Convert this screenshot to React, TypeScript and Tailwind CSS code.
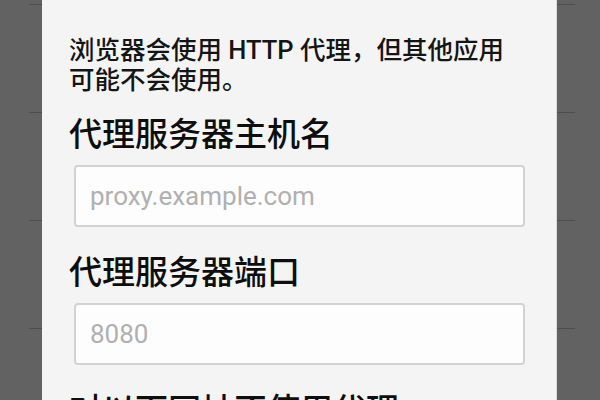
import React from "react";

const cjk = "Roboto, 'Noto Sans CJK SC', sans-serif";

function Field({ placeholder }: { placeholder: string }) {
  return (
    <div className="ml-[5px] mr-[31px] h-[62px] rounded-[4px] border-2 border-[#d2d2d2] bg-[#fdfdfd] flex items-center pl-[14px]">
      <span className="text-[26px] text-[#b0b0b0] leading-none" style={{ fontFamily: "Roboto, sans-serif" }}>
        {placeholder}
      </span>
    </div>
  );
}

export default function App() {
  return (
    <div className="relative w-[600px] h-[400px] overflow-hidden bg-[#626262]" style={{ fontFamily: cjk }}>
      {/* settings list behind the dialog */}
      <div className="flex flex-col pt-[4px] pl-[29px] pr-[25px]">
        {[0, 1, 2, 3].map((i) => (
          <div key={i} className="h-[108px] border-t border-[#4e4e4e]" />
        ))}
      </div>

      {/* proxy dialog */}
      <div className="absolute left-[42px] top-0 w-[515px] h-[400px] bg-[#f4f4f4] border-r border-[#dcdcdc] flex flex-col pl-[27px] pt-[35px]">
        <p className="text-[25.5px] leading-[30px] text-[#151515] pr-[10px] font-medium">
          浏览器会使用 HTTP 代理，但其他应用
          <br />
          可能不会使用。
        </p>
        <h2 className="mt-[21px] text-[33px] leading-[38px] text-[#0e0e0e] font-medium">代理服务器主机名</h2>
        <div className="mt-[11px]">
          <Field placeholder="proxy.example.com" />
        </div>
        <h2 className="mt-[27px] text-[33px] leading-[38px] text-[#0e0e0e] font-medium">代理服务器端口</h2>
        <div className="mt-[11px]">
          <Field placeholder="8080" />
        </div>
        <h2 className="mt-[27px] text-[33px] leading-[38px] text-[#0e0e0e] font-medium">对以下网址不使用代理</h2>
      </div>
    </div>
  );
}
